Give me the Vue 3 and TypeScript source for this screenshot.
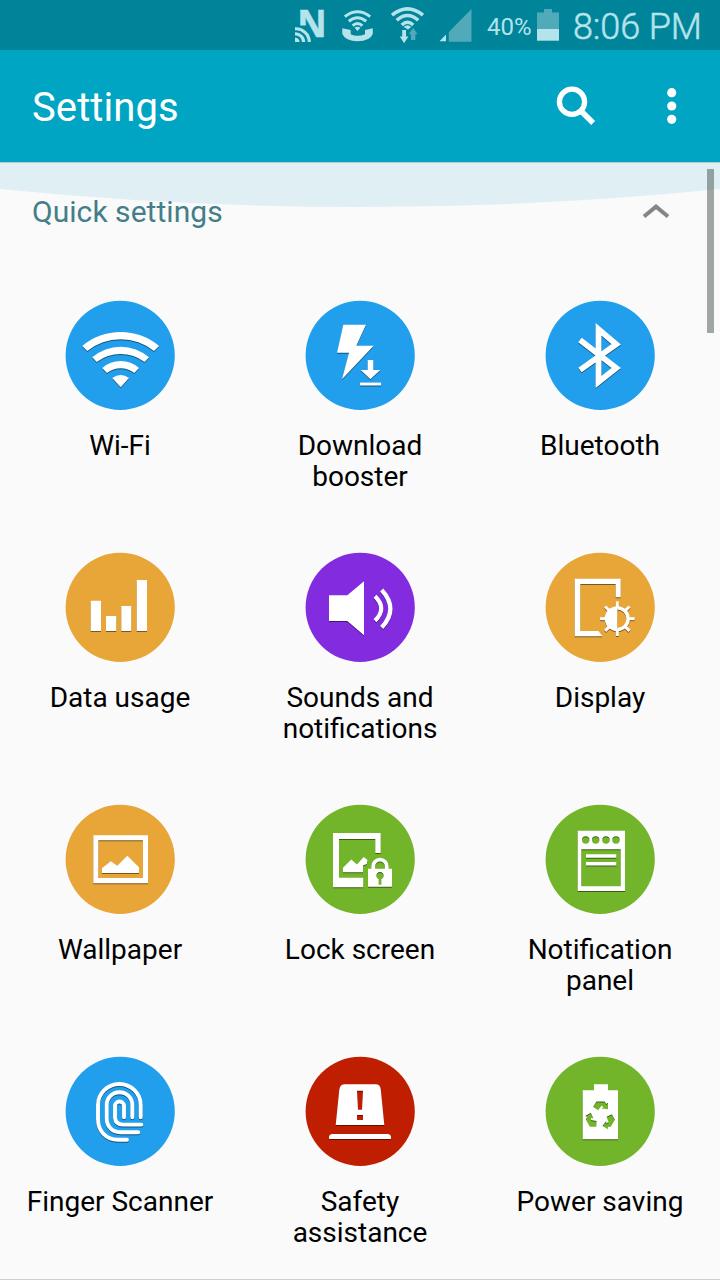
<script setup lang="ts">
interface Tile {
  id: string
  label: string[]
  color: string
}

const blue = '#219fed'
const amber = '#e8a538'
const green = '#72b52a'

const tiles: Tile[] = [
  { id: 'wifi', label: ['Wi-Fi'], color: blue },
  { id: 'booster', label: ['Download', 'booster'], color: blue },
  { id: 'bluetooth', label: ['Bluetooth'], color: blue },
  { id: 'data', label: ['Data usage'], color: amber },
  { id: 'sound', label: ['Sounds and', 'notifications'], color: '#832bdf' },
  { id: 'display', label: ['Display'], color: amber },
  { id: 'wallpaper', label: ['Wallpaper'], color: amber },
  { id: 'lock', label: ['Lock screen'], color: green },
  { id: 'panel', label: ['Notification', 'panel'], color: green },
  { id: 'finger', label: ['Finger Scanner'], color: blue },
  { id: 'safety', label: ['Safety', 'assistance'], color: '#c01e00' },
  { id: 'power', label: ['Power saving'], color: green },
]

const rays = [0, 45, 90, 135, 180, 225, 270, 315]
const recycleAngles = [0, 120, 240]
</script>

<template>
  <div class="screen">
    <div class="status">
      <svg class="status-icons" width="200" height="50" viewBox="280 0 200 50" fill="none">
        <!-- NFC -->
        <text x="297.3" y="36.5" class="nfc" textLength="29.4" lengthAdjust="spacingAndGlyphs">N</text>
        <path class="mask" d="M294 25.5H306.2Q311 29 312.5 37.5V43H294Z" />
        <g class="line" stroke-width="3.2">
          <path d="M295 28.8A13.4 13.4 0 0 1 309.3 42" />
          <path d="M295 34A8 8 0 0 1 303.6 42" />
        </g>
        <path class="solid" d="M295 37.5Q299.5 38 299.5 42H295Z" />
        <!-- Wi-Fi calling -->
        <g class="line" stroke-width="3">
          <path d="M344.8 16.6Q357.5 7 370.2 16.6" />
          <path d="M348.8 21.2Q357.5 14.3 366.2 21.2" />
          <path d="M352.6 25.6Q357.5 21.4 362.4 25.6" />
        </g>
        <path class="solid" d="M354.5 27.8Q357.5 25.8 360.5 27.8L357.5 31ZM342.3 28.3L350.7 30V34.2Q357.5 37.3 365 34.2V30L372.8 28.3V34Q370 41.2 357.5 41.2Q345.5 41.2 342.3 34Z" />
        <!-- Wi-Fi with traffic -->
        <g class="line" stroke-width="3.5">
          <path d="M392 15.2Q407.5 2.5 423 15.2" />
          <path d="M396.7 20.3Q407.5 10.8 418.3 20.3" />
          <path d="M401.8 25Q407.5 19.5 413.2 25" />
        </g>
        <path class="solid" d="M403.7 27Q407.5 23.7 411.3 27L408 29.5Z" />
        <path class="solid" d="M402.2 30H406V36.5H408.4L404.1 43.3L399.8 36.5H402.2Z" />
        <path class="dim" d="M413.2 27.8L417.5 34.3H415.3V40H411V34.3H408.8Z" />
        <!-- Signal -->
        <path class="dim" d="M471.5 9V41.7H448.8V32Z" />
        <path class="solid" d="M446 34.5V41.2H439.5Z" />
      </svg>
      <span class="percent">40%</span>
      <svg class="battery" width="22" height="32" viewBox="0 0 22 32">
        <path class="dim" d="M7 0H15V3.5H22V20H0V3.5H7Z" />
        <path class="solid" d="M0 20H22V31.7H0Z" />
      </svg>
      <span class="clock">8:06 PM</span>
    </div>

    <header class="bar">
      <h1>Settings</h1>
      <svg class="search" width="42" height="42" viewBox="555 85 42 42" fill="none" stroke="#fff">
        <circle cx="572" cy="101.7" r="12.6" stroke-width="5.3" />
        <path d="M580.5 110.5L593.2 123" stroke-width="5.6" />
      </svg>
      <svg class="more" width="12" height="38" viewBox="0 0 12 38" fill="#fff">
        <circle cx="5.7" cy="5.7" r="4.6" />
        <circle cx="5.7" cy="19" r="4.6" />
        <circle cx="5.7" cy="32.3" r="4.6" />
      </svg>
    </header>

    <main class="content">
      <svg class="overscroll" width="720" height="46" viewBox="0 0 720 46">
        <path d="M0 0H720V27A3609 3609 0 0 1 0 27Z" fill="#e0eff3" />
        <path d="M0 .5H720" stroke="#b4ccd0" />
      </svg>
      <div class="scroll" />

      <section class="group">
        <h2>Quick settings</h2>
        <svg class="chevron" width="28" height="18" viewBox="0 0 28 18" fill="none">
          <path d="M2 14.5L14 4.6L26 14.5" stroke="#858585" stroke-width="4" />
        </svg>
      </section>

      <div class="grid">
        <div v-for="tile in tiles" :key="tile.id" class="tile">
          <svg class="icon" width="110" height="111" viewBox="0 0 110 111">
            <circle cx="55.2" cy="55.4" r="54.6" :fill="tile.color" />

            <g v-if="tile.id === 'wifi'" class="glyph">
              <path d="M17.3 46A59.5 59.5 0 0 1 94 46L89 51A53.2 53.2 0 0 0 22.3 51Z" />
              <path d="M27.3 57.3A43 43 0 0 1 84 57.3L79.6 62A40 40 0 0 0 31.7 62Z" />
              <path d="M37.3 68A27.7 27.7 0 0 1 74 68L69.3 73A22.3 22.3 0 0 0 42 73Z" />
              <path d="M47.3 78Q55.7 72 64 78L55.7 87.3Z" />
            </g>

            <g v-else-if="tile.id === 'booster'" class="glyph">
              <path d="M38.3 24.7H61L51.3 45.8H68.7L37 79.3L44 52.8H32Z" />
              <path d="M62.7 60H68.3V70H75.3L65.4 79.3L55.7 70H62.7Z" />
              <path d="M55 82.6H76V85.5H55Z" />
            </g>

            <g v-else-if="tile.id === 'bluetooth'" class="glyph stroke">
              <path stroke-width="5.8" d="M35 40L71.2 68L53.5 82V29.3L71.2 44.3L35 70" />
            </g>

            <g v-else-if="tile.id === 'data'" class="glyph">
              <path d="M25.7 48.7H36V79H25.7ZM41 64H51.3V79H41ZM56.3 54H66.3V79H56.3ZM71.7 28H82V79H71.7Z" />
            </g>

            <g v-else-if="tile.id === 'sound'" class="glyph">
              <path d="M24 43.3H42.3L59 29.3V83.3L42.3 69H24Z" />
              <g class="stroke">
                <path stroke-width="4.2" d="M70 44.3Q82.5 56.5 70 68.7" />
                <path stroke-width="4.2" d="M76.7 38Q94 57 76.7 75.5" />
              </g>
            </g>

            <g v-else-if="tile.id === 'display'" class="glyph">
              <path d="M29.7 26.7H75.7V45.3H70.7V32H35.3V79H53.3L57.7 84.3H29.7Z" />
              <path d="M72.3 54.2A12.5 12.5 0 0 0 72.3 79.2Z" />
              <path class="stroke" stroke-width="3.4" d="M72.3 55.9A10.8 10.8 0 0 1 72.3 77.5" />
              <path
                v-for="a in rays"
                :key="a"
                d="M70.8 49.4H73.8V55.5H70.8Z"
                :transform="`rotate(${a} 72.3 66.7)`"
              />
            </g>

            <g v-else-if="tile.id === 'wallpaper'" class="glyph">
              <path fill-rule="evenodd" d="M28.3 31.3H83V79.3H28.3ZM33.3 36.3V74H78V36.3Z" />
              <path d="M37 64.3L45.7 57.3L52.3 61.7L62.3 51.7L74 63.3V69H37Z" />
            </g>

            <g v-else-if="tile.id === 'lock'" class="glyph">
              <path d="M28 29H75.7V49H70.3V35H34V73.7H58.3V83.3H28Z" />
              <path d="M38 63.7L46.3 55.5L52 60.5L58.7 53L62.5 56L61.8 60L58 61.5V68.3H38Z" />
              <path class="stroke" stroke-width="3.8" d="M68.2 66V62.5A6.8 6.8 0 0 1 81.8 62.5V66" />
              <path
                fill-rule="evenodd"
                d="M63 64.7H87V82.7H63ZM73.7 75.2V80.7H76.3V75.2A3.7 3.7 0 1 0 73.7 75.2Z"
              />
            </g>

            <g v-else-if="tile.id === 'panel'" class="glyph">
              <path
                fill-rule="evenodd"
                d="M32.7 26.7H80V87H32.7ZM36.3 45.3V82.3H75.7V45.3ZM37 36A3.7 3.7 0 1 0 44.4 36A3.7 3.7 0 1 0 37 36ZM47 36A3.7 3.7 0 1 0 54.4 36A3.7 3.7 0 1 0 47 36ZM57.3 36A3.7 3.7 0 1 0 64.7 36A3.7 3.7 0 1 0 57.3 36ZM67.3 36A3.7 3.7 0 1 0 74.7 36A3.7 3.7 0 1 0 67.3 36Z"
              />
              <path d="M41 50.2H71.3V53.8H41ZM41 57.9H71.3V61.5H41Z" />
            </g>

            <g v-else-if="tile.id === 'finger'" class="glyph stroke round">
              <path stroke-width="3.9" d="M75.7 61.3V49A21.3 21 0 0 0 33 49V63C33 75 41 83.8 53 83.8H62" />
              <path stroke-width="3.9" d="M67.3 61.3V49A12.8 12.8 0 0 0 41.7 49V62C41.7 71 47.5 76.2 55 76.2H73.2" />
              <path stroke-width="3.9" d="M59 61.3V50A4.5 4.5 0 0 0 50 50V61.5Q50.5 68.6 58 68.6H76.3" />
            </g>

            <g v-else-if="tile.id === 'safety'" class="glyph">
              <path
                fill-rule="evenodd"
                d="M30.7 69L34.3 33.7Q35 28.3 40 28.3H70.5Q75.3 28.3 75.8 33.7L79.3 69ZM52 34.7L53 53.7H57L58 34.7ZM52 59V64H58V59Z"
              />
              <path d="M24 83V81.5Q24 78 27.5 78H82.5Q86 78 86 81.5V83Z" />
            </g>

            <g v-else class="glyph">
              <mask id="recycle">
                <path d="M0 0H110V110H0Z" fill="#fff" />
                <path
                  v-for="a in recycleAngles"
                  :key="a"
                  fill="#000"
                  d="M48.2 51L51.4 45.6H59.6L61.2 47.9L63 46.8V53.3L56.8 52.6L58.6 51.2L56.6 49.8L53 54.2Z"
                  :transform="`rotate(${a} 55.4 60)`"
                />
              </mask>
              <path mask="url(#recycle)" d="M49 28.3H63V34.3H73V83.3H37.7V34.3H49Z" />
            </g>
          </svg>
          <p class="label">
            <span v-for="line in tile.label" :key="line">{{ line }}</span>
          </p>
        </div>
      </div>
    </main>
  </div>
</template>

<style>
body {
  margin: 0;
  background: #fafafa;
}
</style>

<style scoped>
.screen {
  display: flex;
  flex-direction: column;
  width: 720px;
  height: 1280px;
  box-sizing: border-box;
  overflow: hidden;
  border-bottom: 1px solid #cfcfcf;
  background: #fafafa;
  font-family: Roboto, "Liberation Sans", sans-serif;
}
.status {
  display: flex;
  align-items: center;
  flex: none;
  height: 50px;
  padding-left: 280px;
  background: #00849a;
  color: #b5e3ec;
  white-space: nowrap;
}
.status-icons {
  flex: none;
  overflow: visible;
}
.nfc {
  fill: #b5e3ec;
  stroke: #b5e3ec;
  stroke-width: 0.6px;
  font: 700 38px "Noto Sans", sans-serif;
}
.mask {
  fill: #00849a;
}
.line {
  stroke: #b5e3ec;
}
.solid {
  fill: #b5e3ec;
}
.dim {
  fill: #50aaba;
}
.percent {
  width: 57px;
  padding: 4px 0 0 7px;
  box-sizing: border-box;
  font-size: 24px;
  font-weight: 400;
}
.battery {
  flex: none;
}
.clock {
  margin-left: 14px;
  padding-top: 3px;
  font-size: 36px;
  font-weight: 300;
  letter-spacing: -0.1px;
  -webkit-text-stroke: 0.5px #b5e3ec;
}
.bar {
  display: flex;
  align-items: center;
  flex: none;
  height: 112px;
  padding: 0 42px 0 32px;
  box-sizing: border-box;
  background: #00a5c3;
  color: #fff;
}
.bar h1 {
  flex: 1;
  margin: 3px 0 0;
  font-size: 40px;
  font-weight: 400;
  letter-spacing: 0.1px;
}
.search {
  margin-right: 69px;
}
.content {
  position: relative;
  flex: 1;
}
.overscroll {
  position: absolute;
  top: 0;
  left: 0;
}
.scroll {
  position: absolute;
  top: 6.5px;
  right: 6.5px;
  width: 6.5px;
  height: 164.5px;
  background: rgba(60, 75, 70, 0.48);
}
.group {
  position: relative;
  display: flex;
  align-items: center;
  justify-content: space-between;
  height: 100px;
  padding: 0 50px 0 32px;
}
.group h2 {
  margin: 0 0 1px;
  color: #437e89;
  font-size: 30px;
  font-weight: 400;
  letter-spacing: 0.05px;
}
.chevron {
  margin-bottom: 2px;
}
.grid {
  display: grid;
  grid-template-columns: repeat(3, 240px);
  grid-auto-rows: 252px;
  margin-top: 38px;
}
.tile {
  display: flex;
  flex-direction: column;
  align-items: center;
}
.icon {
  flex: none;
}
.glyph {
  fill: #fff;
  filter: drop-shadow(0.9px 1.6px 0.4px rgba(0, 0, 0, 0.48));
}
.stroke {
  fill: none;
  stroke: #fff;
}
.round {
  stroke-linecap: round;
}
.label {
  display: flex;
  flex-direction: column;
  align-items: center;
  margin: 19px 0 0;
  color: #000;
  font-size: 28px;
  line-height: 31px;
  white-space: nowrap;
}
</style>
